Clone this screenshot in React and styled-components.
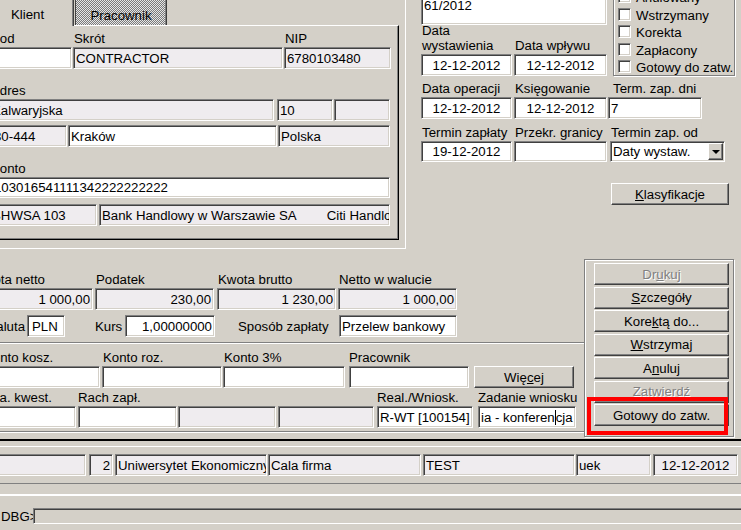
import React from 'react';
import styled, { createGlobalStyle } from 'styled-components';

const GlobalStyle = createGlobalStyle`
  html, body {
    margin: 0;
    padding: 0;
    background: #d4d0c8;
    overflow: hidden;
  }
  body {
    font-family: "Liberation Sans", Arial, sans-serif;
    font-size: 13.25px;
    color: #000;
  }
  #root {
    width: 741px;
    height: 530px;
    overflow: hidden;
  }
`;

// the screenshot is a crop of a bigger window: it starts a bit left of / above the viewport
const Window = styled.div`
  margin: -3px 0 0 -30px;
  width: 771px;
`;

const TopSection = styled.div`
  display: flex;
  height: 252px;
`;

const LeftPanel = styled.div`
  box-sizing: border-box;
  flex: none;
  width: 436px;
  height: 252px;
  padding: 0 6px 8px 11px;
  border-right: 1px solid #fff;
  border-bottom: 1px solid #fff;
`;

const TabRow = styled.div`
  position: relative;
  z-index: 1;
  display: flex;
  align-items: flex-end;
  height: 28px;
`;

const Tab = styled.div`
  box-sizing: border-box;
  width: ${p => p.$w}px;
  height: ${p => (p.$active ? 29 : 26)}px;
  margin-bottom: ${p => (p.$active ? -1 : 0)}px;
  margin-left: ${p => (p.$active ? 0 : 1)}px;
  padding-top: ${p => (p.$active ? 9 : 8)}px;
  text-align: center;
  line-height: 15px;
  background: ${p =>
    p.$active
      ? '#d4d0c8'
      : 'repeating-conic-gradient(#7a7a7a 0% 25%, #e6e6e6 0% 50%) 0 0 / 2px 2px'};
  border-left: 1px solid ${p => (p.$active ? '#fff' : '#404040')};
  border-top: 1px solid #fff;
  border-right: 1px solid #404040;
  box-shadow: inset -1px 0 0 #808080;
`;

const TabPage = styled.div`
  box-sizing: border-box;
  height: 215px;
  padding: 5px 0 0 8px;
  border-top: 1px solid #fff;
  border-left: 1px solid #fff;
  border-right: 1px solid #000;
  border-bottom: 1px solid #000;
  box-shadow: inset -1px -1px 0 #808080;
`;

const Row = styled.div`
  display: flex;
  align-items: ${p => (p.$center ? 'center' : 'flex-end')};
  margin-top: ${p => p.$mt || 0}px;
`;

const Cell = styled.div`
  flex: none;
  display: flex;
  flex-direction: column;
  width: ${p => (p.$w ? `${p.$w}px` : 'auto')};
  margin-left: ${p => p.$ml || 0}px;
`;

const Label = styled.div`
  flex: none;
  height: 15px;
  line-height: 15px;
  width: ${p => (p.$w ? `${p.$w}px` : 'auto')};
  margin-left: ${p => p.$ml || 0}px;
  padding-left: ${p => p.$pl ?? 1}px;
  margin-bottom: ${p => p.$mb ?? 1}px;
  text-align: ${p => p.$align || 'left'};
  white-space: nowrap;
  box-sizing: border-box;
`;

const Field = styled.div`
  box-sizing: border-box;
  flex: none;
  width: ${p => p.$w}px;
  height: ${p => p.$h || 22}px;
  margin-left: ${p => p.$ml || 0}px;
  padding: ${p => p.$pt || 0}px ${p => p.$pr ?? 2}px 0 ${p => p.$pl ?? 2}px;
  display: flex;
  align-items: ${p => (p.$top ? 'flex-start' : 'center')};
  justify-content: ${p =>
    p.$align === 'right' ? 'flex-end' : p.$align === 'center' ? 'center' : 'flex-start'};
  background: ${p => (p.$grey ? '#efecef' : p.$flat ? '#d4d0c8' : '#fff')};
  border: 1px solid;
  border-color: #808080 #fff #fff #808080;
  box-shadow: inset 1px 1px 0 #404040, inset -1px -1px 0 #d4d0c8;
  line-height: 15px;
  white-space: nowrap;
  overflow: hidden;
`;

const Gap = styled.span`
  margin-left: ${p => p.$w}px;
`;

const Caret = styled.span`
  display: inline-block;
  width: 1px;
  height: 15px;
  background: #000;
  vertical-align: top;
`;

const Button = styled.button`
  box-sizing: border-box;
  flex: none;
  width: ${p => p.$w}px;
  height: 22px;
  margin: 0 0 0 ${p => p.$ml || 0}px;
  padding: 0;
  font: inherit;
  line-height: 15px;
  color: ${p => (p.disabled ? '#808080' : '#000')};
  text-shadow: ${p => (p.disabled ? '1px 1px 0 #fff' : 'none')};
  background: #d4d0c8;
  border: 1px solid;
  border-color: #fff #404040 #404040 #fff;
  box-shadow: inset -1px -1px 0 #808080;
`;

/* ---- right upper block ---- */

const RightTop = styled.div`
  flex: none;
  display: grid;
  grid-template-columns: 93px 94px 133px;
  grid-template-rows: 29px 29px 22px 21px 22px 22px 22px 42px;
  margin: -1px 0 0 15px;
  align-content: start;
`;

const Slot = styled.div`
  grid-row: ${p => p.$row};
  grid-column: ${p => p.$col};
  align-self: ${p => p.$self || 'stretch'};
  display: flex;
`;

const CheckGroup = styled.div`
  grid-row: 1 / 4;
  grid-column: 3;
  box-sizing: border-box;
  width: 122px;
  margin: -12px 0 0 5px;
  padding-left: 4px;
  display: flex;
  flex-direction: column;
  justify-content: flex-end;
  border: 1px solid #808080;
  box-shadow: inset 1px 1px 0 #fff, 1px 1px 0 #fff;
`;

const CheckRow = styled.div`
  display: flex;
  align-items: flex-end;
  height: 17.5px;
  line-height: 15px;
  white-space: nowrap;
`;

const CheckBox = styled.span`
  box-sizing: border-box;
  flex: none;
  width: 13px;
  height: 13px;
  margin: 0 5px 2px 0;
  background: #fff;
  border: 1px solid;
  border-color: #808080 #fff #fff #808080;
  box-shadow: inset 1px 1px 0 #404040, inset -1px -1px 0 #d4d0c8;
`;

const DropButton = styled.span`
  box-sizing: border-box;
  flex: none;
  width: 15px;
  height: 17px;
  margin-left: auto;
  display: flex;
  align-items: center;
  justify-content: center;
  background: #d4d0c8;
  border: 1px solid;
  border-color: #fff #404040 #404040 #fff;
  box-shadow: inset -1px -1px 0 #808080;

  &::after {
    content: '';
    border-left: 4px solid transparent;
    border-right: 4px solid transparent;
    border-top: 4px solid #000;
    margin-top: 1px;
  }
`;

/* ---- lower block ---- */

const LowerSection = styled.div`
  display: flex;
  align-items: flex-start;
  height: 190px;
`;

const LowerForm = styled.div`
  box-sizing: border-box;
  flex: none;
  width: 614px;
  padding: 23px 0 3px;
  border-bottom: 1px solid #808080;
  box-shadow: 0 1px 0 #fff;
`;

const AmountGrid = styled.div`
  display: grid;
  grid-template-columns: 121px 122px 121px 119px;
  margin-left: 4px;
`;

const Separator = styled.div`
  margin-top: 5px;
  border-top: 1px solid #808080;
  border-bottom: 1px solid #fff;
`;

const ButtonFrame = styled.div`
  position: relative;
  box-sizing: border-box;
  flex: none;
  width: 150px;
  margin-top: 10px;
  padding: 3px 0 10px 9px;
  display: flex;
  flex-direction: column;
  gap: 1.5px;
  border: 1px solid #808080;
  box-shadow: inset 1px 1px 0 #fff, 1px 1px 0 #fff;
`;

const Highlight = styled.div`
  position: absolute;
  left: 2px;
  top: 137px;
  box-sizing: border-box;
  width: 141px;
  height: 38px;
  border: 4px solid #f00;
  pointer-events: none;
`;

/* ---- status area ---- */

const StatusArea = styled.div`
  border-top: 2px solid #000;
  padding-top: 5px;
`;

const StatusBar = styled.div`
  display: flex;
  padding: 7px 0;
  border-top: 1px solid #fff;
  border-bottom: 1px solid #808080;
`;

const DebugBar = styled.div`
  display: flex;
  align-items: center;
  margin-top: 10px;
  padding-top: 12px;
  border-top: 2px solid #fff;
`;

const DebugPrompt = styled.span`
  flex: none;
  width: 32px;
  margin-left: 31px;
  line-height: 15px;
`;

const checks = ['Anulowany', 'Wstrzymany', 'Korekta', 'Zapłacony', 'Gotowy do zatw.'];

export default function App() {
  return (
    <>
      <GlobalStyle />
      <Window>
        <TopSection>
          <LeftPanel>
            <TabRow>
              <Tab $active $w={93}>Klient</Tab>
              <Tab $w={92}>Pracownik</Tab>
            </TabRow>
            <TabPage>
              <Row>
                <Cell>
                  <Label>Kod</Label>
                  <Field $w={82} />
                </Cell>
                <Cell $ml={1}>
                  <Label>Skrót</Label>
                  <Field $w={210} $grey>CONTRACTOR</Field>
                </Cell>
                <Cell $ml={1}>
                  <Label>NIP</Label>
                  <Field $w={107} $grey>6780103480</Field>
                </Cell>
              </Row>
              <Row $mt={14}>
                <Cell>
                  <Label>Adres</Label>
                  <Field $w={284} $grey $pl={1}>Kalwaryjska</Field>
                </Cell>
                <Field $w={56} $ml={3} $grey>10</Field>
                <Field $w={56} $ml={1} $grey />
              </Row>
              <Row $mt={4}>
                <Field $w={77} $grey $pl={3}>30-444</Field>
                <Field $w={209} $ml={1}>Kraków</Field>
                <Field $w={112} $ml={1} $grey>Polska</Field>
              </Row>
              <Row $mt={14}>
                <Cell>
                  <Label>Konto</Label>
                  <Field $w={400} $h={21} $pl={3}>103016541111342222222222</Field>
                </Cell>
              </Row>
              <Row $mt={6}>
                <Field $w={107} $grey $pl={1}>BHWSA 103</Field>
                <Field $w={291} $ml={2} $grey>
                  Bank Handlowy w Warszawie SA<Gap $w={30} />Citi Handlowy
                </Field>
              </Row>
            </TabPage>
          </LeftPanel>

          <RightTop>
            <Slot $row={1} $col="1 / 3">
              <Field $w={186} $h={29} $top $pt={1}>61/2012</Field>
            </Slot>
            <CheckGroup>
              {checks.map(c => (
                <CheckRow key={c}>
                  <CheckBox />
                  {c}
                </CheckRow>
              ))}
            </CheckGroup>

            <Slot $row={2} $col={1} $self="end">
              <Label style={{ height: 30 }}>
                Data
                <br />
                wystawienia
              </Label>
            </Slot>
            <Slot $row={2} $col={2} $self="end">
              <Label>Data wpływu</Label>
            </Slot>
            <Slot $row={3} $col={1}>
              <Field $w={91} $align="center">12-12-2012</Field>
            </Slot>
            <Slot $row={3} $col={2}>
              <Field $w={93} $align="center">12-12-2012</Field>
            </Slot>

            <Slot $row={4} $col={1} $self="end">
              <Label>Data operacji</Label>
            </Slot>
            <Slot $row={4} $col={2} $self="end">
              <Label>Księgowanie</Label>
            </Slot>
            <Slot $row={4} $col={3} $self="end">
              <Label $pl={5}>Term. zap. dni</Label>
            </Slot>
            <Slot $row={5} $col={1}>
              <Field $w={91} $align="center">12-12-2012</Field>
            </Slot>
            <Slot $row={5} $col={2}>
              <Field $w={93} $align="center">12-12-2012</Field>
            </Slot>
            <Slot $row={5} $col={3}>
              <Field $w={94}>7</Field>
            </Slot>

            <Slot $row={6} $col={1} $self="end">
              <Label>Termin zapłaty</Label>
            </Slot>
            <Slot $row={6} $col={2} $self="end">
              <Label>Przekr. granicy</Label>
            </Slot>
            <Slot $row={6} $col={3} $self="end">
              <Label $pl={3}>Termin zap. od</Label>
            </Slot>
            <Slot $row={7} $col={1}>
              <Field $w={91} $h={21} $align="center">19-12-2012</Field>
            </Slot>
            <Slot $row={7} $col={2}>
              <Field $w={93} $h={21} />
            </Slot>
            <Slot $row={7} $col={3}>
              <Field $w={115} $h={21} $ml={2} $pr={1}>
                Daty wystaw.
                <DropButton />
              </Field>
            </Slot>

            <Slot $row={8} $col={3} $self="end">
              <Button $w={118} $ml={3}>
                <u>K</u>lasyfikacje
              </Button>
            </Slot>
          </RightTop>
        </TopSection>

        <LowerSection>
          <LowerForm>
            <AmountGrid>
              <Cell>
                <Label>Kwota netto</Label>
                <Field $w={119} $grey $align="right">1 000,00</Field>
              </Cell>
              <Cell>
                <Label>Podatek</Label>
                <Field $w={119} $grey $align="right">230,00</Field>
              </Cell>
              <Cell>
                <Label>Kwota brutto</Label>
                <Field $w={119} $grey $align="right">1 230,00</Field>
              </Cell>
              <Cell>
                <Label>Netto w walucie</Label>
                <Field $w={119} $grey $align="right">1 000,00</Field>
              </Cell>
            </AmountGrid>

            <Row $mt={5} $center>
              <Label $w={51} $ml={4} $pl={0} $mb={0} $align="right">Waluta</Label>
              <Field $w={38} $ml={2} $pl={4}>PLN</Field>
              <Label $w={30} $ml={30} $pl={0} $mb={0}>Kurs</Label>
              <Field $w={90} $align="right">1,00000000</Field>
              <Label $w={101} $ml={23} $pl={0} $mb={0}>Sposób zapłaty</Label>
              <Field $w={118}>Przelew bankowy</Field>
            </Row>

            <Separator />

            <Row $mt={6}>
              <Cell $ml={13}>
                <Label>Konto kosz.</Label>
                <Field $w={117} />
              </Cell>
              <Cell $ml={2}>
                <Label>Konto roz.</Label>
                <Field $w={120} />
              </Cell>
              <Cell $ml={1}>
                <Label>Konto 3%</Label>
                <Field $w={122} />
              </Cell>
              <Cell $ml={4}>
                <Label $pl={0}>Pracownik</Label>
                <Field $w={120} />
              </Cell>
              <Button $w={100} $ml={5}>
                Wię<u>c</u>ej
              </Button>
            </Row>

            <Row $mt={2}>
              <Cell $ml={8}>
                <Label>Data. kwest.</Label>
                <Field $w={98} />
              </Cell>
              <Cell $ml={2}>
                <Label $pl={0}>Rach zapł.</Label>
                <Field $w={99} />
              </Cell>
              <Field $w={98} $ml={1} $grey />
              <Field $w={96} $ml={2} $grey />
              <Cell $ml={3}>
                <Label $pl={0}>Real./Wniosk.</Label>
                <Field $w={96}>R-WT [100154]</Field>
              </Cell>
              <Cell $ml={5}>
                <Label $pl={0}>Zadanie wniosku</Label>
                <Field $w={98}>
                  ia - konferen<Caret />cja
                </Field>
              </Cell>
            </Row>
          </LowerForm>

          <ButtonFrame>
            <Button $w={135} disabled>
              Dr<u>u</u>kuj
            </Button>
            <Button $w={135}>
              <u>S</u>zczegóły
            </Button>
            <Button $w={135}>
              Kore<u>k</u>tą do...
            </Button>
            <Button $w={135}>
              <u>W</u>strzymaj
            </Button>
            <Button $w={135}>
              A<u>n</u>uluj
            </Button>
            <Button $w={135} disabled>
              Zatwierdź
            </Button>
            <Button $w={135}>Gotowy do zatw.</Button>
            <Highlight />
          </ButtonFrame>
        </LowerSection>

        <StatusArea>
          <StatusBar>
            <Field $w={114} $ml={2} $grey />
            <Field $w={24} $ml={3} $grey $align="right">2</Field>
            <Field $w={152} $ml={2} $grey>Uniwersytet Ekonomiczny</Field>
            <Field $w={153} $ml={1} $grey>Cala firma</Field>
            <Field $w={152} $ml={2} $grey>TEST</Field>
            <Field $w={75} $ml={1} $grey>uek</Field>
            <Field $w={85} $ml={2} $grey $align="center">12-12-2012</Field>
          </StatusBar>
          <DebugBar>
            <DebugPrompt>DBG&gt;</DebugPrompt>
            <Field $w={740} $h={16} $flat />
          </DebugBar>
        </StatusArea>
      </Window>
    </>
  );
}
